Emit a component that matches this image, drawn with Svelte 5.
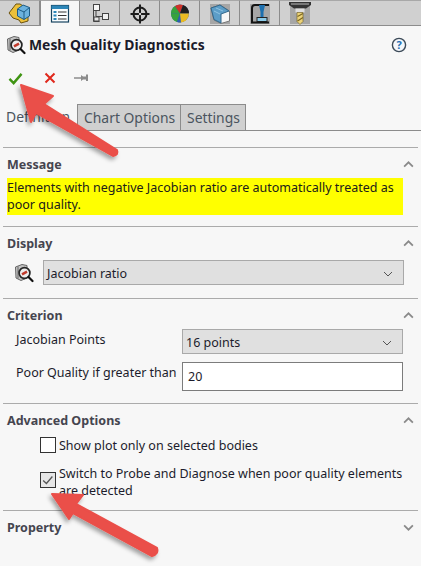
<script>
  const tabs = ['part', 'tree', 'config', 'target', 'pie', 'cube', 'probe', 'drill'];
</script>

{#snippet magnifier()}
  <svg class="mag" viewBox="0 0 20 20" width="20" height="20">
    <path d="M1.500 4 L8 1.500 L13 2.500 L13 15 L7 17.500 L2 15 Z" fill="#c4c4c4" stroke="#666" stroke-width="1"/>
    <path d="M4 3.500 L4 15.500" stroke="#666" stroke-width="1"/>
    <circle cx="10.500" cy="10" r="5.400" fill="#ededed" stroke="#262626" stroke-width="1.700"/>
    <path d="M8 11.400 L13 8.600" stroke="#c0392b" stroke-width="2.400"/>
    <path d="M14.500 14 L18.500 18" stroke="#111" stroke-width="2.200" stroke-linecap="round"/>
  </svg>
{/snippet}

{#snippet caret()}
  <svg class="caret" viewBox="0 0 10 6" width="10" height="6"><path d="M1 1 L5 5 L9 1" fill="none" stroke="#555" stroke-width="1"/></svg>
{/snippet}

{#snippet chev(up)}
  <svg class="chev" viewBox="0 0 12 8" width="11" height="7">
    <path d={up ? 'M1 6.500 L6 1.500 L11 6.500' : 'M1 1.500 L6 6.500 L11 1.500'} fill="none" stroke="#8a8a8a" stroke-width="2"/>
  </svg>
{/snippet}

<div class="panel">
  <div class="tabs">
    {#each tabs as t}
      <div class="tab" class:on={t === 'tree'}>
        <svg viewBox="0 0 24 24" width="24" height="24">
          {#if t === 'part'}
            <path d="M1 12 L8 3 L12 3 L20 8 L20 20 L13 22 L11 19 L5 17 Z" fill="#ecc03a" stroke="#6b5210" stroke-width="1"/>
            <path d="M9.500 8 L15 4 L21.500 6.500 L21.500 15 L16 18.500 L9.500 15 Z" fill="#6cb2de" stroke="#1d5c86"/>
            <path d="M9.500 8 L16 11 L21.500 6.500 M16 11 L16 18.500" fill="none" stroke="#1d5c86"/>
          {:else if t === 'tree'}
            <rect x="3.500" y="4.500" width="17" height="16.500" fill="#f9fcfe" stroke="#17445f" stroke-width="1.200"/>
            <rect x="3.500" y="4.500" width="17" height="3.500" fill="#2c86b8"/>
            <path d="M5.500 10h3v2h-3zM5.500 13.500h3v2h-3zM5.500 17h3v2h-3z" fill="#2c86b8"/>
            <path d="M10 11h8.500M10 14.500h8.500M10 18h8.500" stroke="#333" stroke-width="1.200"/>
          {:else if t === 'config'}
            <rect x="5.500" y="3.500" width="6" height="6" fill="#f6f6f6" stroke="#444"/>
            <path d="M5.500 9.500V20.500H11.500M8 9.500V15.500H14" fill="none" stroke="#444"/>
            <rect x="14.500" y="12.500" width="6" height="6" fill="#f0f0f0" stroke="#444"/>
            <rect x="6" y="16" width="5" height="4" fill="#e8e8e8" stroke="#444"/>
          {:else if t === 'target'}
            <circle cx="12" cy="13" r="6.500" fill="none" stroke="#1d1d1d" stroke-width="2"/>
            <path d="M12 3.500v19M2.500 13h19" stroke="#1d1d1d" stroke-width="2"/>
            <circle cx="12" cy="13" r="1.200" fill="#d8d8d8"/>
          {:else if t === 'pie'}
            <circle cx="12" cy="12.500" r="9" fill="#2e5fb0"/>
            <path d="M12 12.500 L3 12.500 A9 9 0 0 1 7 5 Z" fill="#37a23c"/>
            <path d="M12 12.500 L7 5 A9 9 0 0 1 15 4 Z" fill="#cf3327"/>
            <path d="M12 12.500 L15 4 A9 9 0 0 1 21 12.500 Z" fill="#1f1f1f"/>
            <path d="M12 12.500 L21 12.500 A9 9 0 0 1 11 21.500 Z" fill="#eabb22"/>
            <path d="M12 12.500 L3 12.500 A9 9 0 0 0 9 21 Z" fill="#37a23c"/>
            <path d="M12 12.500 L9 21 A9 9 0 0 0 13 21.500 Z" fill="#2e5fb0"/>
          {:else if t === 'cube'}
            <rect x="2" y="3" width="20" height="20" fill="#a6a6a6"/>
            <path d="M3 7 L12 4 L21.500 10 L21.500 20 L13 22.500 L6 19 Z" fill="#f6f6f6" stroke="#777"/>
            <path d="M3 7 L12 4 L21 10 L13 13 L13 22 L6 18.500 Z" fill="#5c9dc7" stroke="#31678c"/>
            <path d="M6 10 L12 13 M8 7 L15 10" stroke="#8fc3e2"/>
          {:else if t === 'probe'}
            <rect x="2" y="3" width="20" height="20" fill="#a6a6a6"/>
            <path d="M4 21 L4 7 Q4 4 7 4 H21" fill="none" stroke="#141414" stroke-width="2"/>
            <path d="M11 4h6l-1.500 7h-3z" fill="#1c6fae"/>
            <path d="M14 11v5" stroke="#1c6fae" stroke-width="3"/>
            <rect x="9" y="16.500" width="10" height="4" fill="#8ccbe8" stroke="#222"/>
            <path d="M3 21.500h18" stroke="#141414" stroke-width="2"/>
          {:else}
            <rect x="2" y="3" width="20" height="20" fill="#a6a6a6"/>
            <path d="M1 1h22v3l-5 3.500H6L1 4z" fill="#333"/>
            <path d="M3 3h18" stroke="#bbb"/>
            <rect x="7.500" y="7.500" width="9" height="4" fill="#dedede"/>
            <path d="M9 11.500h6v9l-3 3-3-3z" fill="#ecd37a" stroke="#6b5a20" stroke-width=".6"/>
            <path d="M9.500 15.500 L15 12.500 M9.500 20 L15 16.500" stroke="#7a6620" stroke-width="1.200"/>
          {/if}
        </svg>
      </div>
    {/each}
  </div>

  <header class="head">
    {@render magnifier()}
    <h1>Mesh Quality Diagnostics</h1>
    <svg class="help" viewBox="0 0 16 16" width="16" height="16">
      <circle cx="8" cy="8" r="6.600" fill="#f4f7fb" stroke="#3c4a58" stroke-width="1.400"/>
      <text x="8" y="12" text-anchor="middle" class="q">?</text>
    </svg>
  </header>

  <div class="actions">
    <svg viewBox="0 0 16 14" width="15" height="13"><path d="M1.500 7.500 L6 12 L14.500 2" fill="none" stroke="#3f9412" stroke-width="2.600"/></svg>
    <svg class="x" viewBox="0 0 14 14" width="14" height="14"><path d="M2.500 2.500 L11.500 11.500 M11.500 2.500 L2.500 11.500" stroke="#e0281c" stroke-width="2"/></svg>
    <svg class="pin" viewBox="0 0 16 12" width="16" height="12"><path d="M1 6h7" stroke="#8c8c8c" stroke-width="1.500"/><path d="M8 3 L8 9 L10 7.500 L13 7.500 L13 9 L15 9 L15 2.500 L13 2.500 L13 4.500 L10 4.500 Z" fill="#8c8c8c"/></svg>
  </div>

  <div class="subtabs">
    <div class="st on">Definition</div>
    <div class="st">Chart Options</div>
    <div class="st">Settings</div>
    <div class="st-rest"></div>
  </div>

  <section class="sec msg">
    <div class="sh"><span>Message</span>{@render chev(true)}</div>
    <p class="note">Elements with negative Jacobian ratio are automatically treated as poor quality.</p>
  </section>

  <section class="sec disp">
    <div class="sh"><span>Display</span>{@render chev(true)}</div>
    <div class="drow">
      {@render magnifier()}
      <div class="select wide"><span>Jacobian ratio</span>{@render caret()}</div>
    </div>
  </section>

  <section class="sec crit">
    <div class="sh"><span>Criterion</span>{@render chev(true)}</div>
    <div class="form">
      <span class="lb">Jacobian Points</span>
      <div class="select"><span>16 points</span>{@render caret()}</div>
      <span class="lb">Poor Quality if greater than</span>
      <div class="input">20</div>
    </div>
  </section>

  <section class="sec adv">
    <div class="sh"><span>Advanced Options</span>{@render chev(true)}</div>
    <label class="cb first"><span class="box"></span><span>Show plot only on selected bodies</span></label>
    <label class="cb second"><span class="box">
      <svg viewBox="0 0 16 16" width="14" height="14"><path d="M2.500 8.500 L6.200 12 L13 4" fill="none" stroke="#555" stroke-width="1.500"/></svg>
    </span><span class="long">Switch to Probe and Diagnose when poor quality elements are detected</span></label>
  </section>

  <section class="sec prop">
    <div class="sh"><span>Property</span>{@render chev(false)}</div>
  </section>

  <svg class="arrows" viewBox="0 0 421 566" width="421" height="566">
    <defs>
      <filter id="sh" x="-20%" y="-20%" width="140%" height="140%">
        <feDropShadow dx="-2" dy="3" stdDeviation="2" flood-color="#000" flood-opacity=".35"/>
      </filter>
    </defs>
    <path filter="url(#sh)" fill="#ea4f49" stroke="#ea4f49" stroke-width="2" stroke-linejoin="round"
      d="M21 85 L53 96 L44 104 L117 150 Q119 155 113 156 L36 113 L31 122 Z"/>
    <path filter="url(#sh)" fill="#ea4f49" stroke="#ea4f49" stroke-width="2" stroke-linejoin="round"
      d="M52 494 L83 495 L76 504 L157 548 Q159 554 152 556 L73 513 L69 519 Z"/>
  </svg>
</div>

<style>
  :global(body) { margin: 0; background: #f7f7f7; }
  .panel {
    position: relative;
    width: 421px;
    height: 566px;
    overflow: hidden;
    background: #f7f7f7;
    font-family: "Noto Sans", "Open Sans", sans-serif;
    font-size: 12.500px;
    color: #1c1c2c;
  }
  .tabs { display: flex; height: 26px; }
  .tab {
    flex: none;
    box-sizing: border-box;
    width: 40px;
    height: 26px;
    display: flex;
    justify-content: center;
    background: #d0d0d0;
    border-right: 1px solid #8c8c8c;
    border-top: 1px solid #a8a8a8;
    border-bottom: 1px solid #8c8c8c;
  }
  .tab.on { background: #f7f7f7; border-bottom: 0; border-left: 1px solid #8c8c8c; }
  .tab:last-child { border-right: 0; flex: 1; justify-content: flex-start; padding-left: 8px; }
  .tab svg { display: block; }

  .head { display: flex; align-items: center; height: 20px; margin-top: 9px; padding: 0 14px 0 6px; }
  h1 { margin: 0 0 0 3px; font-size: 13.900px; font-weight: 700; color: #1b1b2b; line-height: 20px; flex: 1; }
  .mag { flex: none; }
  .help .q { font: 700 11px "Noto Sans", sans-serif; fill: #1f6fb5; }

  .actions { display: flex; align-items: center; gap: 18px; height: 16px; margin-top: 15px; padding-left: 8px; }
  .actions svg { display: block; }
  .actions .x { margin-left: 2px; }
  .actions .pin { margin-left: -2px; }

  .subtabs { display: flex; height: 27px; margin-top: 18px; }
  .st {
    box-sizing: border-box;
    padding: 2px 0 0 6px;
    width: 103px;
    font-size: 13.900px;
    line-height: 22px;
    color: #4a545e;
    background: #d0d0d0;
    border: 1px solid #8c8c8c;
    border-left: 0;
  }
  .st:nth-child(3) { width: 65px; }
  .st.on { width: 78px; background: #f7f7f7; border-bottom: 0; border-top: 0; }
  .st-rest { flex: 1; border-bottom: 1px solid #8c8c8c; }

  .sec { box-sizing: border-box; margin: 0 3px; padding: 7px 4px 0; border-top: 1px solid #ababab; }
  .sh {
    display: flex;
    justify-content: space-between;
    align-items: center;
    height: 18px;
    font-weight: 700;
    color: #45454f;
  }
  .msg { margin-top: 16px; height: 79px; }
  .note {
    box-sizing: border-box;
    margin: 5px 0 0;
    padding-top: 1px;
    width: 396px;
    height: 37px;
    line-height: 17px;
    background: #ffff00;
    color: #20201a;
  }
  .disp { height: 72px; }
  .drow { display: flex; align-items: center; margin-top: 8px; padding-left: 7px; }
  .drow .mag { margin-right: 9px; }
  .select {
    box-sizing: border-box;
    display: flex;
    align-items: center;
    justify-content: space-between;
    width: 221px;
    height: 25px;
    padding: 3px 10px 0 3px;
    background: #e0e0e0;
    border: 1px solid #a9a9a9;
    line-height: 18px;
  }
  .select.wide { width: 361px; }
  .crit { height: 105px; }
  .form {
    display: grid;
    grid-template-columns: 175px 221px;
    grid-template-rows: 25px 29px;
    row-gap: 8px;
    margin-top: 5px;
  }
  .lb { padding: 2px 0 0 9px; white-space: nowrap; line-height: 18px; }
  .input {
    box-sizing: border-box;
    padding: 4px 5px;
    background: #fff;
    border: 1px solid #7c7c7c;
    line-height: 20px;
  }
  .adv { height: 107px; }
  .cb { display: flex; gap: 3px; padding-left: 33px; line-height: 17px; }
  .cb.first { margin-top: 8px; }
  .cb.second { margin-top: 11px; }
  .box {
    flex: none;
    box-sizing: border-box;
    width: 16px;
    height: 16px;
    display: flex;
    align-items: center;
    justify-content: center;
    background: #fff;
    border: 1px solid #333;
  }
  .second .box { background: #e6e6e6; margin-top: 7px; }
  .long { max-width: 350px; }
  .arrows { position: absolute; left: 0; top: 0; pointer-events: none; }
</style>
